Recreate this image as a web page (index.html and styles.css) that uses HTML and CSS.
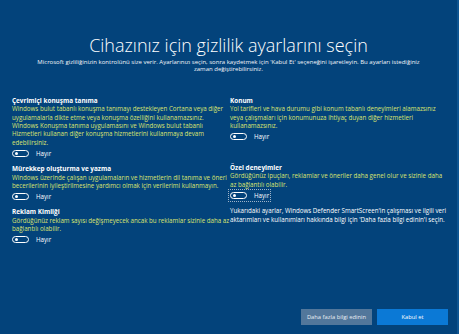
FILE: index.html
```html
<!DOCTYPE html>
<html lang="tr">
<head>
<meta charset="utf-8">
<title>Gizlilik ayarları</title>
<link rel="stylesheet" href="styles.css">
</head>
<body>
<div class="page">
  <header class="intro">
    <h1 class="title">Cihazınız için gizlilik ayarlarını seçin</h1>
    <p class="lead">Microsoft gizliliğinizin kontrolünü size verir. Ayarlarınızı seçin, sonra kaydetmek için 'Kabul Et' seçeneğini işaretleyin. Bu ayarları istediğiniz<br>zaman değiştirebilirsiniz.</p>
  </header>

  <main class="columns">
    <div class="col col-left">
      <section class="setting">
        <h2 class="setting-title">Çevrimiçi konuşma tanıma</h2>
        <p class="setting-desc">Windows bulut tabanlı konuşma tanımayı destekleyen Cortana veya diğer<br>uygulamalarla dikte etme veya konuşma özelliğini kullanamazsınız.<br>Windows Konuşma tanıma uygulamasını ve Windows bulut tabanlı<br>Hizmetleri kullanan diğer konuşma hizmetlerini kullanmaya devam<br>edebilirsiniz.</p>
        <div class="toggle-row"><span class="toggle"><span class="knob"></span></span><span class="toggle-label">Hayır</span></div>
      </section>
      <section class="setting">
        <h2 class="setting-title">Mürekkep oluşturma ve yazma</h2>
        <p class="setting-desc">Windows üzerinde çalışan uygulamaların ve hizmetlerin dil tanıma ve öneri<br>becerilerinin iyileştirilmesine yardımcı olmak için verilerimi kullanmayın.</p>
        <div class="toggle-row"><span class="toggle"><span class="knob"></span></span><span class="toggle-label">Hayır</span></div>
      </section>
      <section class="setting">
        <h2 class="setting-title">Reklam Kimliği</h2>
        <p class="setting-desc">Gördüğünüz reklam sayısı değişmeyecek ancak bu reklamlar sizinle daha az<br>bağlantılı olabilir.</p>
        <div class="toggle-row"><span class="toggle"><span class="knob"></span></span><span class="toggle-label">Hayır</span></div>
      </section>
    </div>

    <div class="col col-right">
      <section class="setting setting-location">
        <h2 class="setting-title">Konum</h2>
        <p class="setting-desc">Yol tarifleri ve hava durumu gibi konum tabanlı deneyimleri alamazsınız<br>veya çalışmaları için konumunuza ihtiyaç duyan diğer hizmetleri<br>kullanamazsınız.</p>
        <div class="toggle-row"><span class="toggle"><span class="knob"></span></span><span class="toggle-label">Hayır</span></div>
      </section>
      <section class="setting">
        <h2 class="setting-title">Özel deneyimler</h2>
        <p class="setting-desc">Gördüğünüz ipuçları, reklamlar ve öneriler daha genel olur ve sizinle daha<br>az bağlantılı olabilir.</p>
        <div class="toggle-row"><span class="focus-ring"><span class="toggle"><span class="knob"></span></span><span class="toggle-label">Hayır</span></span></div>
      </section>
      <p class="note">Yukarıdaki ayarlar, Windows Defender SmartScreen'in çalışması ve ilgili veri<br>aktarımları ve kullanımları hakkında bilgi için 'Daha fazla bilgi edinin'i seçin.</p>
    </div>
  </main>

  <footer class="actions">
    <button class="btn btn-secondary" type="button">Daha fazla bilgi edinin</button>
    <button class="btn btn-primary" type="button">Kabul et</button>
  </footer>
</div>
</body>
</html>
```

FILE: styles.css
```css
html, body {
  margin: 0;
  padding: 0;
}

body {
  background: #03437b;
  font-family: "Open Sans", "Noto Sans", "Liberation Sans", sans-serif;
  color: #ffffff;
}

.page {
  box-sizing: border-box;
  width: 459px;
  height: 334px;
  display: flex;
  flex-direction: column;
  padding: 35px 0 9px 0;
  border-right: 2px solid #0f5590;
  overflow: hidden;
}

.intro {
  text-align: center;
}

.title {
  margin: 0;
  font-weight: 300;
  font-size: 18px;
  line-height: 20px;
  color: #ffffff;
}

.lead {
  margin: 4px 0 0 0;
  font-size: 6px;
  line-height: 7.4px;
  color: #f2f5f9;
}

.columns {
  display: grid;
  grid-template-columns: 214px 1fr;
  column-gap: 4px;
  padding: 0 10px 0 12px;
  margin-top: 23px;
}

.col {
  display: flex;
  flex-direction: column;
}

.setting {
  margin-bottom: 6px;
}

.setting-location {
  margin-bottom: 21.5px;
}

.setting-title {
  margin: 0;
  font-size: 6.4px;
  line-height: 8.4px;
  font-weight: 700;
  color: #ffffff;
}

.setting-desc {
  margin: 0;
  font-size: 6.2px;
  line-height: 8.4px;
  color: #dbe36f;
  white-space: nowrap;
}

.toggle-row {
  height: 12px;
  display: flex;
  align-items: center;
}

.focus-ring {
  display: flex;
  align-items: center;
  height: 11px;
  margin-left: -1px;
  padding: 0 1px;
  outline: 1px dotted #9fb3c8;
}

.toggle {
  box-sizing: border-box;
  width: 17px;
  height: 7px;
  border: 1px solid #ffffff;
  border-radius: 4px;
  display: flex;
  align-items: center;
  padding-left: 1.5px;
}

.knob {
  width: 3px;
  height: 3px;
  border-radius: 50%;
  background: #ffffff;
}

.toggle-label {
  margin-left: 7px;
  font-size: 6.2px;
  color: #ffffff;
}

.note {
  margin: 0;
  font-size: 6.2px;
  line-height: 8.4px;
  color: #ffffff;
  white-space: nowrap;
}

.actions {
  margin-top: auto;
  display: flex;
  justify-content: flex-end;
  gap: 5px;
  padding-right: 9px;
}

.btn {
  width: 71px;
  height: 16px;
  border: 0;
  padding: 0;
  font-family: inherit;
  font-size: 5.8px;
  color: #ffffff;
  cursor: pointer;
}

.btn-secondary {
  background: #52779b;
  color: #e8eef4;
}

.btn-primary {
  background: #0b79d6;
}
```
